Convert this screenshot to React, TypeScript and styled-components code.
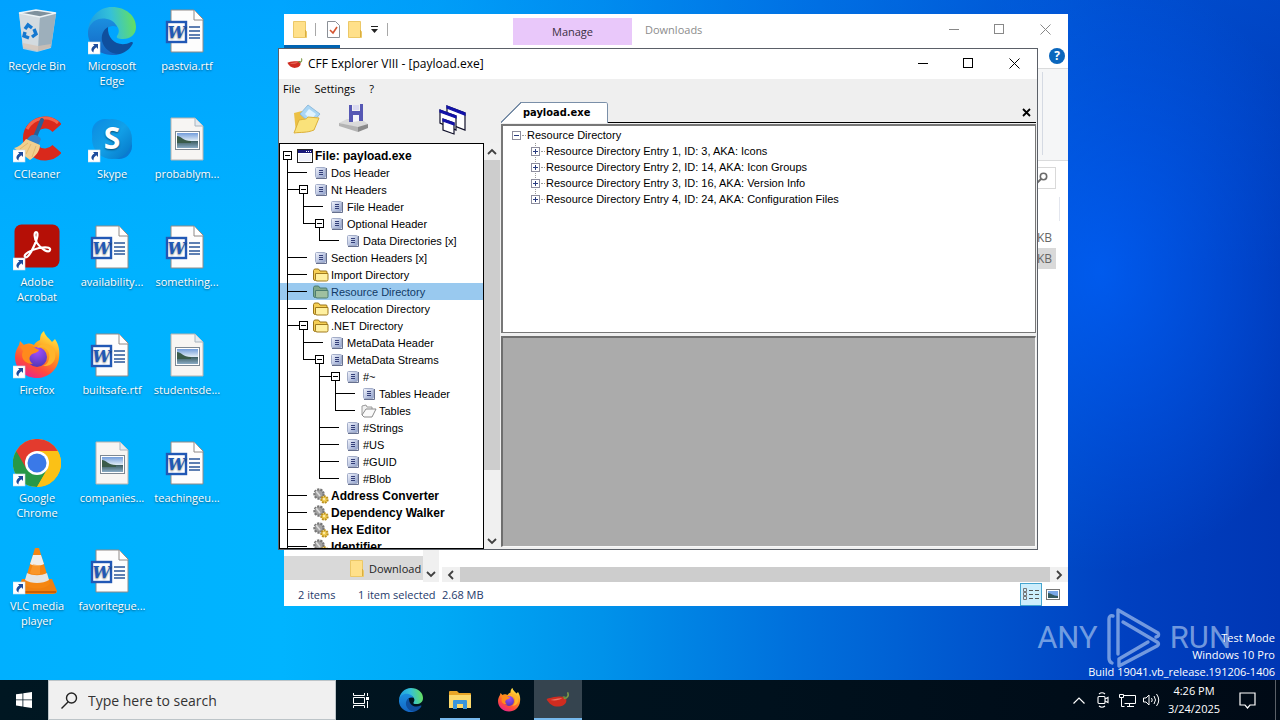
import React from "react";
import styled, { createGlobalStyle, css } from "styled-components";

const UI = `"Open Sans", "Noto Sans", sans-serif`;
const CLASSIC = `"Liberation Sans", Arial, sans-serif`;

const GlobalStyle = createGlobalStyle`
  *, *::before, *::after { box-sizing: border-box; }
  body { margin: 0; font-family: ${UI}; font-size: 11px; color: #000; }
  button, input { font: inherit; color: inherit; border: 0; padding: 0; margin: 0; background: none; border-radius: 0; }
  svg { display: block; flex: none; }
  ul { list-style: none; margin: 0; padding: 0; }
`;

/* ---------- Application icons ---------- */

const Shortcut = () => (
  <g>
    <rect x="0" y="35" width="12" height="12" fill="#fff" stroke="#c9dcea" strokeWidth=".6" />
    <path d="M5 37h5v5l-1.700-1.700c-2 1.500-3 3-2.800 5.200-3-1.600-2.800-5 .9-7z" fill="#1e4c9c" />
  </g>
);

const EdgeArt = () => (
  <g>
    <defs>
      <linearGradient id="edgeTop" x1="0" y1=".5" x2="1" y2=".4">
        <stop offset="0" stopColor="#1b9de2" />
        <stop offset=".5" stopColor="#35c1d8" />
        <stop offset="1" stopColor="#66e05c" />
      </linearGradient>
      <linearGradient id="edgeLeft" x1="0" y1="0" x2="0" y2="1">
        <stop offset="0" stopColor="#1b8fdf" />
        <stop offset="1" stopColor="#1466c4" />
      </linearGradient>
    </defs>
    <path d="M0 24C1 10 11 0 24 0c14 0 24 9 24 20 0 8-6 12-13 12-5 0-7-1-6-3 3-4 2-8-1-11C20 11 5 12 0 24z" fill="url(#edgeTop)" />
    <path d="M0 24c2-10 11-14 19-12 6 1 9 5 10 8-6-3-13 1-13 9 0 9 7 17 16 18-2 1-5 1-8 1C10 48-1 37 0 24z" fill="url(#edgeLeft)" />
    <path d="M20 20c-5 3-7 8-6 14 2 8 10 14 18 13 6-2 11-6 13-11 0-1-1-1-2-1-11 6-24-1-23-15z" fill="#0f4f9e" />
  </g>
);

const FirefoxArt = () => (
  <g>
    <defs>
      <linearGradient id="foxBody" x1=".8" y1="0" x2=".3" y2="1">
        <stop offset="0" stopColor="#fff04a" />
        <stop offset=".4" stopColor="#ff9a1f" />
        <stop offset=".75" stopColor="#ff4a3c" />
        <stop offset="1" stopColor="#e8248e" />
      </linearGradient>
      <radialGradient id="foxGlobe" cx=".5" cy=".2" r=".8">
        <stop offset="0" stopColor="#a44dff" />
        <stop offset="1" stopColor="#5337b5" />
      </radialGradient>
    </defs>
    <path d="M27 9c0-4 1-7 4-9 1 5 5 7 8 11l3-3c4 6 5 12 4 19-1 12-11 20-22 20C12 47 2 38 2 26c0-5 2-9 4-12l1-4 4 4c4-2 7-2 10 0 1-2 3-4 6-5z" fill="url(#foxBody)" />
    <circle cx="24" cy="26" r="10" fill="url(#foxGlobe)" />
    <path d="M7 16c5-4 11-3 15 1l4 2c-1 3-6 3-8 5-3 3-1 7 2 9-9 0-13-7-10-13z" fill="#ff8a1c" />
    <path d="M24 17c8-3 14 3 12 11-1 4-3 6-6 7 9 1 14-6 12-14-1-5-5-8-10-8-4 0-7 2-8 4z" fill="#ffb52b" />
  </g>
);

const ChiliArt = () => (
  <g>
    <path d="M1 14c5-1 11-4 19-4 8-1 15 0 17 4 2 7-4 13-13 14C14 29 5 23 1 14z" fill="#cf2c20" />
    <path d="M8 16c7-1 14-4 22-3-4 3-14 5-22 3z" fill="#ec7463" />
    <path d="M34 13c6-1 8-5 6-10" stroke="#7d9a48" strokeWidth="3" fill="none" strokeLinecap="round" />
    <path d="M30 10c4-2 8 0 8 4-3-1-5-1-8-4z" fill="#6b8a3a" />
  </g>
);

const RecycleIcon = () => (
  <svg width="48" height="48" viewBox="0 0 48 48" aria-hidden="true">
    <path d="M6 6l17-3 20 4-5 34-14 4-14-3z" fill="#c5d0d7" fillOpacity=".9" />
    <path d="M6 6l21 4-2 34-15-4z" fill="#d3dbe0" />
    <path d="M27 10l16-4-5 34-13 4z" fill="#9dafbb" />
    <path d="M6 6l17-3 20 3-16 4z" fill="#7f919d" stroke="#edf3f6" strokeWidth="1.400" />
    <path d="M10 36l15 3 13-2-1 4-12 3-15-3z" fill="#d5c3b4" fillOpacity=".7" />
    <g stroke="#1478d0" strokeWidth="3.400" fill="none">
      <path d="M12 22l3-4 4 3" />
      <path d="M21 22l2 5-4 3" />
      <path d="M16 31l-5-2 1-4" />
    </g>
  </svg>
);

const EdgeIcon = () => (
  <svg width="48" height="48" viewBox="0 0 48 48" aria-hidden="true"><EdgeArt /><Shortcut /></svg>
);

const FirefoxIcon = () => (
  <svg width="48" height="48" viewBox="0 0 48 48" aria-hidden="true"><FirefoxArt /><Shortcut /></svg>
);

const WordIcon = () => (
  <svg width="48" height="48" viewBox="0 0 48 48" aria-hidden="true">
    <path d="M8 3h23l9 9v33H8z" fill="#fdfdfd" stroke="#8f8a88" />
    <path d="M31 3v10h9" fill="#fff" stroke="#8f8a88" />
    <path d="M26 20h11M26 24h11M26 28h11M26 31h11" stroke="#2a5699" strokeWidth="1.300" />
    <rect x="4" y="15" width="19" height="20" fill="#fff" stroke="#2158b5" strokeWidth="2.400" />
    <text x="13.500" y="31" textAnchor="middle" fontFamily="DejaVu Serif, serif" fontStyle="italic" fontWeight="700" fontSize="16" fill="#2158b5">W</text>
  </svg>
);

const PictureFileIcon = () => (
  <svg width="48" height="48" viewBox="0 0 48 48" aria-hidden="true">
    <defs>
      <linearGradient id="photoSky" x1="0" y1="0" x2="0" y2="1">
        <stop offset="0" stopColor="#6b97d8" />
        <stop offset=".5" stopColor="#dce9f5" />
        <stop offset=".55" stopColor="#3f5f63" />
        <stop offset="1" stopColor="#8fb0cc" />
      </linearGradient>
    </defs>
    <path d="M8 3h24l8 8v34H8z" fill="#f7f5f3" stroke="#b9b3ae" />
    <path d="M32 3v8h8" fill="#e4eaf0" stroke="#a9b4be" />
    <rect x="13.500" y="17.500" width="22" height="16" fill="url(#photoSky)" stroke="#fff" />
    <rect x="12.500" y="16.500" width="24" height="18" fill="none" stroke="#7d8893" />
    <path d="M14 21c4 0 6 5 14 5v2H14z" fill="#3a5b4a" />
  </svg>
);

const CCleanerIcon = () => (
  <svg width="48" height="48" viewBox="0 0 48 48" aria-hidden="true">
    <path d="M44 13A16 16 0 1 0 44 34" fill="none" stroke="#d9291c" strokeWidth="12" />
    <path d="M45 8A20 20 0 0 0 14 14" fill="none" stroke="#f2644c" strokeWidth="3" />
    <path d="M29 5l-7 17" stroke="#2b5f95" strokeWidth="4" strokeLinecap="round" />
    <path d="M16 22c4-4 9-2 12 2l-3 7-13-4z" fill="#3483c9" />
    <path d="M1 33c5-1 9-5 12-9l14 6c0 6-4 11-10 15z" fill="#f1cf8e" />
    <path d="M7 34l8-6M13 39l5-10M19 42l4-11" stroke="#e0b970" />
    <Shortcut />
  </svg>
);

const SkypeIcon = () => (
  <svg width="48" height="48" viewBox="0 0 48 48" aria-hidden="true">
    <defs>
      <linearGradient id="skypeFill" x1="0" y1="0" x2="1" y2="1">
        <stop offset="0" stopColor="#0c8be0" />
        <stop offset=".5" stopColor="#12a0e8" />
        <stop offset="1" stopColor="#0573c4" />
      </linearGradient>
    </defs>
    <circle cx="17" cy="17" r="13" fill="#0b90e6" />
    <circle cx="31" cy="31" r="13" fill="#0a7ad2" />
    <circle cx="24" cy="24" r="20" fill="url(#skypeFill)" />
    <text x="24" y="34" textAnchor="middle" fontFamily="Open Sans, sans-serif" fontWeight="700" fontSize="30" fill="#fff">S</text>
    <Shortcut />
  </svg>
);

const AcrobatIcon = () => (
  <svg width="48" height="48" viewBox="0 0 48 48" aria-hidden="true">
    <rect x="1.500" y="1.500" width="45" height="43" rx="7" fill="#b50f06" />
    <path d="M12 34c-2-3 6-7 14-9 6-1 12-1 11 2-1 4-9-1-13-7-3-5-3-11-1-11 3 0 1 8-2 14-3 7-7 13-9 11z" fill="none" stroke="#fff" strokeWidth="2.200" strokeLinejoin="round" />
    <Shortcut />
  </svg>
);

const ChromeIcon = () => (
  <svg width="48" height="48" viewBox="0 0 48 48" aria-hidden="true">
    <circle cx="24" cy="24" r="24" fill="#fbc116" />
    <path d="M3.200 12A24 24 0 0 0 24 48l10.500-18L24 24z" fill="#279847" />
    <path d="M3.200 12A24 24 0 0 1 44.800 12H24L13.600 30z" fill="#e33b2e" />
    <path d="M44.800 12H24v12l10.400 6L24 48a24 24 0 0 0 20.800-36z" fill="#fbc116" />
    <circle cx="24" cy="24" r="12" fill="#fff" />
    <circle cx="24" cy="24" r="9.500" fill="#3a79e8" />
    <Shortcut />
  </svg>
);

const VlcIcon = () => (
  <svg width="48" height="48" viewBox="0 0 48 48" aria-hidden="true">
    <path d="M9 32h30l5 12c0 2-2 3-4 3H8c-2 0-4-1-4-3z" fill="#f08010" />
    <path d="M5 44h38v2H5z" fill="#c85f06" />
    <path d="M22 1h4l11 36c-6 6-20 6-26 0z" fill="#f58612" />
    <path d="M20 8h8l3 9c-4 2-10 2-14 0z" fill="#f0eeec" />
    <path d="M14 26c6 3 14 3 20 0l2 7c-6 4-18 4-24 0z" fill="#e6e4e2" />
    <path d="M20 17c3 1 5 1 7 1v9c-4 1-8 0-10-1z" fill="#ffa640" fillOpacity=".5" />
    <Shortcut />
  </svg>
);

/* ---------- Small glyphs ---------- */

const Folder = () => (
  <svg width="14" height="17" viewBox="0 0 14 17" aria-hidden="true">
    <path d="M.5.500h12v9l1 1v6H.5z" fill="#ffe08a" stroke="#ecc867" />
    <path d="M12.500 9v7" stroke="#d9ae3f" />
  </svg>
);

const CheckedPage = () => (
  <svg width="13" height="17" viewBox="0 0 13 17" aria-hidden="true">
    <path d="M.5.500h8l4 4v12H.5z" fill="#fff" stroke="#8b9097" />
    <path d="M3 9l3 3 4-6" fill="none" stroke="#d4542f" strokeWidth="1.600" />
  </svg>
);

const Chevron = ({ dir, color = "#404040" }: { dir: "up" | "down" | "left" | "right"; color?: string }) => {
  const paths = { up: "M1 7l4-4 4 4", down: "M1 3l4 4 4-4", left: "M7 1L3 5l4 4", right: "M3 1l4 4-4 4" };
  return (
    <svg width="10" height="10" viewBox="0 0 10 10" aria-hidden="true">
      <path d={paths[dir]} fill="none" stroke={color} strokeWidth="1.800" />
    </svg>
  );
};

const CaptionGlyph = ({ kind }: { kind: "min" | "max" | "close" }) => (
  <svg width="11" height="11" viewBox="0 0 11 11" fill="none" stroke="currentColor" aria-hidden="true">
    {kind === "min" && <path d="M1 5.500h10" />}
    {kind === "max" && <rect x=".5" y=".5" width="9" height="9" />}
    {kind === "close" && <path d="M.5.500l10 10M10.500.500l-10 10" />}
  </svg>
);

const HeaderGlyph = () => (
  <svg width="12" height="12" viewBox="0 0 12 12" aria-hidden="true">
    <defs>
      <linearGradient id="hdrFill" x1="0" y1="0" x2="1" y2="1">
        <stop offset="0" stopColor="#f4f6fd" />
        <stop offset="1" stopColor="#8fa0cc" />
      </linearGradient>
    </defs>
    <rect x=".5" y=".5" width="10" height="10" rx="1" fill="url(#hdrFill)" stroke="#a3adc8" />
    <path d="M11.500 1v10.500H1" fill="none" stroke="#66708f" />
    <path d="M4 3.500h4M4 5.500h4M4 7.500h4" stroke="#343f78" />
  </svg>
);

const ClosedFolderGlyph = ({ selected }: { selected?: boolean }) => (
  <svg width="16" height="14" viewBox="0 0 16 14" aria-hidden="true">
    <path d="M.5 11V2.500l1-1.500h4l1.500 2H13q1 0 1 1v7q0 1.500-1.500 1.500h-10Q.5 12.500.5 11z" fill={selected ? "#7fa98a" : "#f6cf55"} stroke={selected ? "#4c7d70" : "#9a7418"} />
    <path d="M2.500 5.500h12.500v6q0 1.500-1.500 1.500H4q-1.500 0-1.500-1.500z" fill={selected ? "#9fc0a0" : "#fff0a0"} stroke={selected ? "#4c7d70" : "#a07b1e"} />
  </svg>
);

const OpenFolderGlyph = () => (
  <svg width="16" height="14" viewBox="0 0 16 14" aria-hidden="true">
    <path d="M1 11V2l4-1 1 2h5v3" fill="#f1f1f1" stroke="#9a9a9a" />
    <path d="M1 11l4-6h10l-4 8H3z" fill="#fafafa" stroke="#8a8a8a" />
  </svg>
);

const WindowGlyph = () => (
  <svg width="16" height="14" viewBox="0 0 16 14" aria-hidden="true">
    <rect x=".5" y=".5" width="15" height="13" fill="#fff" stroke="#222" />
    <rect x="1" y="1" width="14" height="3" fill="#18187c" />
    <path d="M9 2.500h1M11 2.500h1M13 2.500h1" stroke="#fff" />
    <rect x="2" y="5" width="12" height="7" fill="#eef0fa" />
  </svg>
);

const GearsGlyph = () => (
  <svg width="16" height="16" viewBox="0 0 16 16" aria-hidden="true">
    <circle cx="6" cy="6" r="4.600" fill="#a2a2a2" stroke="#777" strokeWidth="2.200" strokeDasharray="2.200 1" />
    <path d="M3 3l4 5" stroke="#dcdcdc" strokeWidth="1.600" />
    <circle cx="11.500" cy="11.500" r="3.200" fill="#f0cc52" stroke="#b98f1f" strokeWidth="2" strokeDasharray="1.800 1" />
    <circle cx="11" cy="11" r="1" fill="#fff4c4" />
  </svg>
);

const OpenFileIcon = () => (
  <svg width="28" height="30" viewBox="0 0 28 30" aria-hidden="true">
    <path d="M1 9l8-2 3 3v18l-9 1z" fill="#ecc044" />
    <path d="M7 10L15 1l12 9-9 10z" fill="#a9d6f5" stroke="#8fbbdc" />
    <path d="M12 10l4-5 7 5-5 6z" fill="#e0f3fe" />
    <path d="M1 29l5-13c5-1 7 0 9-3l11 1-5 12c-7 3-13 2-20 3z" fill="#fae27a" stroke="#dcb03a" />
  </svg>
);

const SaveIcon = () => (
  <svg width="29" height="29" viewBox="0 0 29 29" aria-hidden="true">
    <path d="M0 19l8-4h14l7 5-9 4z" fill="#dadada" />
    <path d="M0 19l19 4v5L0 22z" fill="#b4b4b4" />
    <path d="M19 23l10-3v4l-10 4z" fill="#8a8a8a" />
    <path d="M10 1h3v6h8V0h3v17h-4v-6h-6v7h-4z" fill="#5658b4" />
    <path d="M14 1h6v5h-6z" fill="#dadaf0" />
    <path d="M14 11h6v6l-6 1z" fill="#f4f4fa" />
  </svg>
);

const CascadeIcon = () => (
  <svg width="28" height="31" viewBox="0 0 28 31" aria-hidden="true">
    <g stroke="#10102a" strokeWidth="1.200">
      <path d="M8 2l18 7v17L8 19z" fill="#fff" />
      <path d="M8 2l18 7v2L8 4z" fill="#1212a8" stroke="#1212a8" />
      <path d="M1 6l16 6v14L1 19z" fill="#fff" />
      <path d="M1 6l16 6v2L1 8z" fill="#1212a8" stroke="#1212a8" />
      <path d="M4 15l11 4v11L4 26z" fill="#fff" />
      <path d="M4 15l11 4v2L4 17z" fill="#1212a8" stroke="#1212a8" />
    </g>
  </svg>
);

/* ---------- Desktop ---------- */

const Screen = styled.div`
  min-height: 100vh;
  display: flex;
  flex-direction: column;
  overflow: hidden;
`;

const Desktop = styled.main`
  position: relative;
  flex: 1;
  padding: 7px 0 0;
  background:
    radial-gradient(ellipse 240px 300px at 86% 40%, rgba(0, 100, 255, 0.7), rgba(0, 100, 255, 0)),
    linear-gradient(180deg, rgba(0, 120, 255, 0.25), rgba(0, 120, 255, 0) 40%),
    linear-gradient(90deg, #00b0ff 0%, #00b4ff 22%, #00aaf6 34%, #0092ea 47%, #0070dc 62%, #0052cc 78%, #0040c0 88%, #0036b4 100%);
`;

const IconGrid = styled.ul`
  display: grid;
  grid-auto-flow: column;
  grid-template-rows: repeat(6, 108px);
  grid-auto-columns: 75px;
  justify-content: start;
`;

const IconButton = styled.button`
  width: 74px;
  display: flex;
  flex-direction: column;
  align-items: center;
  gap: 3px;
  padding: 0 4px;
  color: #fff;
  line-height: 15px;
  text-align: center;
  text-shadow: 0 1px 2px rgba(0, 0, 0, 0.5);
`;

const Watermark = styled.div`
  position: absolute;
  right: 49px;
  bottom: 11px;
  display: flex;
  align-items: center;
  gap: 8px;
  color: rgba(190, 214, 245, 0.6);
  font: 31px/60px Roboto, "Liberation Sans", sans-serif;
`;

const BuildInfo = styled.div`
  position: absolute;
  right: 5px;
  bottom: 0;
  color: #fff;
  line-height: 17px;
  text-align: right;
`;

const desktopItems: [string, React.FC][] = [
  ["Recycle Bin", RecycleIcon], ["CCleaner", CCleanerIcon], ["Adobe Acrobat", AcrobatIcon],
  ["Firefox", FirefoxIcon], ["Google Chrome", ChromeIcon], ["VLC media player", VlcIcon],
  ["Microsoft Edge", EdgeIcon], ["Skype", SkypeIcon], ["availability...", WordIcon],
  ["builtsafe.rtf", WordIcon], ["companies...", PictureFileIcon], ["favoritegue...", WordIcon],
  ["pastvia.rtf", WordIcon], ["probablym...", PictureFileIcon], ["something...", WordIcon],
  ["studentsde...", PictureFileIcon], ["teachingeu...", WordIcon],
];

/* ---------- Shared window parts ---------- */

const CaptionButtons = styled.div<{ $muted?: boolean }>`
  display: flex;
  align-self: stretch;
  margin-left: auto;
  color: ${(p) => (p.$muted ? "#888" : "#000")};
`;

const CaptionButton = styled.button`
  width: 46px;
  display: grid;
  place-items: center;
`;

const Captions = ({ muted }: { muted?: boolean }) => (
  <CaptionButtons $muted={muted}>
    <CaptionButton aria-label="Minimize"><CaptionGlyph kind="min" /></CaptionButton>
    <CaptionButton aria-label="Maximize"><CaptionGlyph kind="max" /></CaptionButton>
    <CaptionButton aria-label="Close"><CaptionGlyph kind="close" /></CaptionButton>
  </CaptionButtons>
);

const VScroll = styled.div`
  width: 16px;
  display: flex;
  flex-direction: column;
  background: #f0f0f0;
`;

const HScroll = styled.div`
  flex: 1;
  height: 15px;
  display: flex;
  margin-left: 3px;
  background: #f0f0f0;
`;

const ScrollButton = styled.button`
  height: 17px;
  display: grid;
  place-items: center;
  ${HScroll} & { height: 15px; width: 18px; }
`;

const Thumb = styled.div<{ $size: number; $rest: number }>`
  flex: ${(p) => p.$size} 0 0;
  background: #cdcdcd;
  & + div { flex: ${(p) => p.$rest} 0 0; }
`;

/* ---------- File Explorer window ---------- */

const Explorer = styled.section`
  position: absolute;
  left: 284px;
  top: 14px;
  width: 784px;
  height: 592px;
  display: flex;
  flex-direction: column;
  background: #fff;
`;

const ExplorerTitle = styled.header`
  display: flex;
  height: 31px;
`;

const QuickAccess = styled.div`
  width: 229px;
  display: flex;
  align-items: center;
  gap: 8px;
  padding-left: 9px;
`;

const Divider = styled.span`
  width: 1px;
  height: 13px;
  margin-right: 3px;
  background: #a8a8a8;
`;

const ManageTab = styled.button`
  width: 119px;
  margin-top: 4px;
  background: #e9c8fa;
  color: #3b2f42;
`;

const ExplorerName = styled.span`
  padding: 8px 0 0 13px;
  line-height: 16px;
  color: #8c8c8c;
`;

const RibbonTabs = styled.div`
  height: 24px;
  flex: none;
  display: flex;
  align-items: flex-start;
  justify-content: space-between;
  border-bottom: 1px solid #dadbdc;
`;

const FileTab = styled.div`
  width: 56px;
  height: 22px;
  background: #0063b1;
`;

const HelpButton = styled.button`
  width: 16px;
  height: 16px;
  margin: 3px 3px 0 0;
  border-radius: 50%;
  background: #0a66bd;
  color: #fff;
  font-size: 12px;
  font-weight: 700;
  line-height: 16px;
`;

const Ribbon = styled.div`
  height: 92px;
  flex: none;
  padding: 3px 25px 5px 0;
  display: flex;
  justify-content: flex-end;
  background: #f5f6f7;
  border-bottom: 1px solid #dadbdc;
  &::after { content: ""; width: 1px; background: #d5dae3; }
`;

const AddressRow = styled.div`
  height: 36px;
  flex: none;
  display: flex;
  justify-content: flex-end;
  padding: 6px 12px 8px 0;
`;

const SearchBox = styled.button`
  width: 120px;
  display: flex;
  align-items: center;
  justify-content: flex-end;
  padding-right: 7px;
  border: 1px solid #d9d9d9;
`;

const FileArea = styled.div`
  flex: 1;
  display: flex;
  min-height: 0;
`;

const NavPane = styled.nav`
  width: 139px;
  display: flex;
  flex-direction: column;
  justify-content: flex-end;
  padding-bottom: 2px;
`;

const NavItem = styled.a`
  height: 24px;
  display: flex;
  align-items: center;
  gap: 5px;
  padding-left: 66px;
  color: #222;
  text-decoration: none;
  background: #d9d9d9;
`;

const FilePane = styled.div`
  flex: 1;
  display: flex;
  flex-direction: column;
`;

const ColumnHeads = styled.div`
  height: 24px;
  margin-right: 8px;
  border-right: 1px solid #e3e6ee;
`;

const FileSizes = styled.table`
  flex: 1;
  display: block;
  padding: 6px 12px 0 0;
  font-size: 12px;
  color: #666;
  tbody { display: block; }
  tr { display: flex; justify-content: flex-end; }
  tr[aria-selected="true"] { background: #d9d9d9; }
  td { padding: 0 4px 0 0; line-height: 21px; }
`;

const StatusBar = styled.footer`
  height: 24px;
  flex: none;
  display: flex;
  align-items: center;
  padding: 0 4px 0 14px;
  color: #1e3a6b;
`;

const StatusText = styled.span<{ $width?: number }>`
  width: ${(p) => (p.$width ? `${p.$width}px` : "auto")};
`;

const ViewButton = styled.button<{ $active?: boolean }>`
  width: 22px;
  height: 23px;
  display: grid;
  place-items: center;
  ${(p) => p.$active && css`
    margin-left: auto;
    background: #cdeefc;
    border: 1px solid #45a5cf;
  `}
`;

const ExplorerWindow = () => (
  <Explorer aria-label="Downloads">
    <ExplorerTitle>
      <QuickAccess>
        <Folder />
        <Divider />
        <CheckedPage />
        <Folder />
        <svg width="9" height="9" viewBox="0 0 9 9" aria-hidden="true"><path d="M1 1.500h7" stroke="#222" /><path d="M1 4h7L4.500 8z" fill="#222" /></svg>
        <Divider />
      </QuickAccess>
      <ManageTab>Manage</ManageTab>
      <ExplorerName>Downloads</ExplorerName>
      <Captions muted />
    </ExplorerTitle>
    <RibbonTabs><FileTab /><HelpButton aria-label="Help">?</HelpButton></RibbonTabs>
    <Ribbon />
    <AddressRow>
      <SearchBox aria-label="Search Downloads">
        <svg width="12" height="12" viewBox="0 0 12 12" aria-hidden="true"><circle cx="7.500" cy="4.500" r="3.200" fill="none" stroke="#6a6a6a" strokeWidth="1.600" /><path d="M5 7l-4 4" stroke="#6a6a6a" strokeWidth="1.800" /></svg>
      </SearchBox>
    </AddressRow>
    <FileArea>
      <NavPane><NavItem href="#"><Folder />Download</NavItem></NavPane>
      <VScroll>
        <Thumb $size={0} $rest={1} /><div />
        <ScrollButton aria-label="Scroll down"><Chevron dir="down" /></ScrollButton>
      </VScroll>
      <FilePane>
        <ColumnHeads />
        <FileSizes><tbody><tr><td>KB</td></tr><tr aria-selected="true"><td>KB</td></tr></tbody></FileSizes>
        <HScrollRow />
      </FilePane>
    </FileArea>
    <StatusBar>
      <StatusText $width={60}>2 items</StatusText>
      <StatusText $width={84}>1 item selected</StatusText>
      <StatusText>2.68 MB</StatusText>
      <ViewButton $active aria-label="Details">
        <svg width="16" height="13" viewBox="0 0 16 13" fill="none" aria-hidden="true"><path d="M.5.500h3v3h-3zM.5 4.500h3v3h-3zM.5 8.500h3v3h-3z" stroke="#777" /><path d="M6 2.500h4M6 6.500h4M6 10.500h4M12 2.500h4M12 6.500h4M12 10.500h4" stroke="#555" /></svg>
      </ViewButton>
      <ViewButton aria-label="Large icons">
        <svg width="14" height="11" viewBox="0 0 14 11" aria-hidden="true"><rect x=".5" y=".5" width="13" height="10" fill="#fff" stroke="#777" /><rect x="2" y="2" width="10" height="7" fill="#7aa7e6" /><path d="M2 4c3 0 5 3 10 3v2H2z" fill="#35595e" /></svg>
      </ViewButton>
    </StatusBar>
  </Explorer>
);

const PaneBottom = styled.div`
  display: flex;
`;

const HScrollRow = () => (
  <PaneBottom>
    <HScroll>
      <ScrollButton aria-label="Scroll left"><Chevron dir="left" /></ScrollButton>
      <Thumb $size={1} $rest={0} /><div />
      <ScrollButton aria-label="Scroll right"><Chevron dir="right" /></ScrollButton>
    </HScroll>
  </PaneBottom>
);

/* ---------- CFF Explorer window ---------- */

const Cff = styled.section`
  position: absolute;
  left: 278px;
  top: 48px;
  width: 760px;
  height: 502px;
  display: flex;
  flex-direction: column;
  background: #efefef;
  border: 1px solid #5b6068;
`;

const CffTitle = styled.header`
  height: 30px;
  flex: none;
  display: flex;
  align-items: center;
  gap: 5px;
  padding: 0 0 2px 8px;
  background: #fff;
  font-size: 12px;
`;

const MenuBar = styled.nav`
  height: 20px;
  flex: none;
  display: flex;
  align-items: flex-start;
  gap: 14px;
  padding-left: 4px;
  font-size: 11px;
  line-height: 19px;
`;

const CffBody = styled.div`
  flex: 1;
  min-height: 0;
  display: grid;
  grid-template-columns: 222px 1fr;
`;

const SideColumn = styled.div`
  display: flex;
  flex-direction: column;
  min-height: 0;
`;

const ToolBar = styled.div`
  height: 44px;
  flex: none;
  display: flex;
  align-items: flex-start;
  gap: 18px;
  padding: 5px 34px 0 14px;
`;

const ToolButton = styled.button<{ $end?: boolean }>`
  ${(p) => p.$end && css`margin-left: auto;`}
`;

const SideBody = styled.div`
  flex: 1;
  min-height: 0;
  display: flex;
`;

const Tree = styled.ul`
  width: 205px;
  padding-top: 3px;
  overflow: hidden;
  background: #fff;
  border: 1px solid #000;
  font-family: ${CLASSIC};
  font-size: 11px;
`;

const TreeRow = styled.li<{ $selected?: boolean; $bold?: boolean }>`
  height: 17px;
  display: flex;
  line-height: 19px;
  white-space: nowrap;
  ${(p) => p.$selected && css`background: #99c9ef; color: #123a66;`}
  ${(p) => p.$bold && css`font-weight: 700; font-size: 12px;`}
`;

const ink = "linear-gradient(#000, #000)";
const guideLines: Record<string, string> = {
  " ": "none",
  v: `${ink} 7px 0 / 1px 17px no-repeat`,
  t: `${ink} 7px 0 / 1px 17px no-repeat, ${ink} 7px 8px / 9px 1px no-repeat`,
  l: `${ink} 7px 0 / 1px 9px no-repeat, ${ink} 7px 8px / 9px 1px no-repeat`,
  "-": `${ink} 0 8px / 11px 1px no-repeat`,
  o: `${ink} 0 8px / 3px 1px no-repeat, ${ink} 7px 13px / 1px 4px no-repeat`,
  r: `${ink} 7px 13px / 1px 4px no-repeat`,
};

const Guide = styled.span<{ $kind: string }>`
  width: 16px;
  height: 17px;
  flex: none;
  display: flex;
  padding: 4px 0 0 3px;
  background: ${(p) => guideLines[p.$kind]};
`;

const Toggle = styled.button`
  width: 9px;
  height: 9px;
  border: 1px solid #000;
  background: ${ink} center / 5px 1px no-repeat, #fff;
`;

const TreeIcon = styled.span`
  width: 18px;
  height: 17px;
  margin-right: 1px;
  flex: none;
  display: grid;
  place-items: center;
`;

type Glyph = "window" | "header" | "folder" | "open" | "gears";
const glyphs: Record<Glyph, React.FC<{ selected?: boolean }>> = {
  window: WindowGlyph, header: HeaderGlyph, folder: ClosedFolderGlyph, open: OpenFolderGlyph, gears: GearsGlyph,
};

const treeRows: { guides: string; icon: Glyph; label: string; bold?: boolean; selected?: boolean }[] = [
  { guides: "r", icon: "window", label: "File: payload.exe", bold: true },
  { guides: "t-", icon: "header", label: "Dos Header" },
  { guides: "to", icon: "header", label: "Nt Headers" },
  { guides: "vt-", icon: "header", label: "File Header" },
  { guides: "vlo", icon: "header", label: "Optional Header" },
  { guides: "v l-", icon: "header", label: "Data Directories [x]" },
  { guides: "t-", icon: "header", label: "Section Headers [x]" },
  { guides: "t-", icon: "folder", label: "Import Directory" },
  { guides: "t-", icon: "folder", label: "Resource Directory", selected: true },
  { guides: "t-", icon: "folder", label: "Relocation Directory" },
  { guides: "to", icon: "folder", label: ".NET Directory" },
  { guides: "vt-", icon: "header", label: "MetaData Header" },
  { guides: "vlo", icon: "header", label: "MetaData Streams" },
  { guides: "v to", icon: "header", label: "#~" },
  { guides: "v vt-", icon: "header", label: "Tables Header" },
  { guides: "v vl-", icon: "open", label: "Tables" },
  { guides: "v t-", icon: "header", label: "#Strings" },
  { guides: "v t-", icon: "header", label: "#US" },
  { guides: "v t-", icon: "header", label: "#GUID" },
  { guides: "v l-", icon: "header", label: "#Blob" },
  { guides: "t-", icon: "gears", label: "Address Converter", bold: true },
  { guides: "t-", icon: "gears", label: "Dependency Walker", bold: true },
  { guides: "t-", icon: "gears", label: "Hex Editor", bold: true },
  { guides: "t-", icon: "gears", label: "Identifier", bold: true },
];

const MainColumn = styled.div`
  display: flex;
  flex-direction: column;
  min-height: 0;
  padding: 3px 1px 2px 0;
`;

const TabStrip = styled.div`
  height: 21px;
  flex: none;
  display: flex;
`;

const edge = "#7a8fa8";
const Tab = styled.button`
  width: 107px;
  flex: none;
  padding-left: 22px;
  text-align: left;
  font: 700 11px/20px "DejaVu Sans Condensed", "DejaVu Sans", sans-serif;
  border-right: 1px solid ${edge};
  border-radius: 0 3px 0 0;
  background:
    linear-gradient(${edge}, ${edge}) 20px 0 / 100px 1px no-repeat,
    linear-gradient(135deg, #efefef 14px, ${edge} 14px, ${edge} 15px, #fff 15px);
`;

const TabRest = styled.div`
  flex: 1;
  display: flex;
  align-items: center;
  justify-content: flex-end;
  padding-right: 5px;
  border-bottom: 1px solid #000;
`;

const Details = styled.div`
  height: 209px;
  flex: none;
  margin-top: 1px;
  padding: 1px 9px;
  background: #fff;
  border: 1px solid #777;
  border-width: 2px 1px 1px 2px;
  font-family: ${CLASSIC};
  font-size: 11px;
  line-height: 16px;
`;

const DetailList = styled.ul`
  ul { margin-left: 19px; background: repeating-linear-gradient(#999 0 1px, transparent 1px 2px) 4px 0 / 1px 56px no-repeat; }
`;

const DetailRow = styled.div`
  display: flex;
  align-items: center;
  &::before { content: ""; order: 1; width: 4px; border-top: 1px dotted #999; margin: 0 1px; }
  span { order: 2; }
`;

const DetailToggle = styled.button<{ $closed?: boolean }>`
  width: 9px;
  height: 9px;
  border: 1px solid #8d8d9d;
  background:
    linear-gradient(#2b3d80, #2b3d80) center / 5px 1px no-repeat,
    linear-gradient(#2b3d80, #2b3d80) center / 1px ${(p) => (p.$closed ? 5 : 0)}px no-repeat,
    #fff;
`;

const EmptyPane = styled.div`
  flex: 1;
  margin-top: 3px;
  background: #ababab;
  border: solid;
  border-width: 2px 1px 1px 2px;
  border-color: #6e6e6e #f8f8f8 #f8f8f8 #6e6e6e;
`;

const entries = [
  "Resource Directory Entry 1, ID: 3, AKA: Icons",
  "Resource Directory Entry 2, ID: 14, AKA: Icon Groups",
  "Resource Directory Entry 3, ID: 16, AKA: Version Info",
  "Resource Directory Entry 4, ID: 24, AKA: Configuration Files",
];

const CffWindow = () => (
  <Cff aria-label="CFF Explorer VIII">
    <CffTitle>
      <svg width="16" height="13" viewBox="0 0 44 32" aria-hidden="true"><ChiliArt /></svg>
      <span>CFF Explorer VIII - [payload.exe]</span>
      <Captions />
    </CffTitle>
    <MenuBar><button>File</button><button>Settings</button><button>?</button></MenuBar>
    <CffBody>
      <SideColumn>
        <ToolBar>
          <ToolButton aria-label="Open"><OpenFileIcon /></ToolButton>
          <ToolButton aria-label="Save"><SaveIcon /></ToolButton>
          <ToolButton $end aria-label="Windows"><CascadeIcon /></ToolButton>
        </ToolBar>
        <SideBody>
          <Tree>
            {treeRows.map((row) => {
              const Icon = glyphs[row.icon];
              return (
                <TreeRow key={row.label} $bold={row.bold} $selected={row.selected}>
                  {[...row.guides].map((kind, i) => (
                    <Guide key={i} $kind={kind}>
                      {(kind === "o" || kind === "r") && <Toggle aria-label={`Collapse ${row.label}`} />}
                    </Guide>
                  ))}
                  <TreeIcon><Icon selected={row.selected} /></TreeIcon>
                  <span>{row.label}</span>
                </TreeRow>
              );
            })}
          </Tree>
          <VScroll>
            <ScrollButton aria-label="Scroll up"><Chevron dir="up" /></ScrollButton>
            <Thumb $size={310} $rest={62} /><div />
            <ScrollButton aria-label="Scroll down"><Chevron dir="down" /></ScrollButton>
          </VScroll>
        </SideBody>
      </SideColumn>
      <MainColumn>
        <TabStrip>
          <Tab>payload.exe</Tab>
          <TabRest>
            <button aria-label="Close tab">
              <svg width="9" height="9" viewBox="0 0 9 9" aria-hidden="true"><path d="M1 1l7 7M8 1L1 8" stroke="#000" strokeWidth="1.800" /></svg>
            </button>
          </TabRest>
        </TabStrip>
        <Details>
          <DetailList>
            <li>
              <DetailRow><DetailToggle aria-label="Collapse" /><span>Resource Directory</span></DetailRow>
              <ul>
                {entries.map((entry) => (
                  <li key={entry}><DetailRow><DetailToggle $closed aria-label="Expand" /><span>{entry}</span></DetailRow></li>
                ))}
              </ul>
            </li>
          </DetailList>
        </Details>
        <EmptyPane />
      </MainColumn>
    </CffBody>
  </Cff>
);

/* ---------- Taskbar ---------- */

const Bar = styled.footer`
  height: 40px;
  flex: none;
  display: flex;
  color: #fff;
  background: linear-gradient(90deg, #001722, #00111d 60%, #000a16);
`;

const TaskButton = styled.button<{ $wide?: boolean; $state?: "open" | "active" }>`
  width: ${(p) => (p.$wide ? 50 : 48)}px;
  display: grid;
  place-items: center;
  margin-right: 1px;
  ${(p) => p.$state === "open" && css`
    background: linear-gradient(#76b9ed, #76b9ed) center bottom / 40px 2px no-repeat;
  `}
  ${(p) => p.$state === "active" && css`
    background: linear-gradient(#76b9ed, #76b9ed) center bottom / 48px 2px no-repeat, #35444f;
  `}
`;

const StartButton = styled.button`
  width: 48px;
  display: grid;
  place-items: center;
`;

const SearchField = styled.label`
  width: 288px;
  display: flex;
  align-items: center;
  gap: 10px;
  padding-left: 12px;
  color: #222;
  background: #f0f0f0;
  border: 1px solid #fff;
  border-bottom-color: #a8a8a8;
  outline: 1px solid #bcc4c8;
  outline-offset: -1px;
  input { width: 220px; font-size: 14px; outline: 0; }
  input::placeholder { color: #333; opacity: 1; }
`;

const Tray = styled.div`
  margin-left: auto;
  display: flex;
`;

const TrayButton = styled.button<{ $wide?: boolean }>`
  width: ${(p) => (p.$wide ? 44 : 24)}px;
  display: grid;
  place-items: center;
`;

const Clock = styled.button`
  width: 62px;
  line-height: 18px;
  text-align: center;
`;

const ShowDesktop = styled.button`
  width: 5px;
  margin-left: 6px;
  border-left: 1px solid #5a6068;
`;

const Taskbar = () => (
  <Bar>
    <StartButton aria-label="Start">
      <svg width="16" height="16" viewBox="0 0 16 16" fill="#fff" aria-hidden="true"><path d="M0 2.300l6.500-.9v6.100H0zM7.300 1.300L16 0v7.500H7.300zM0 8.300h6.500v6.200L0 13.600zM7.300 8.300H16V16l-8.700-1.300z" /></svg>
    </StartButton>
    <SearchField>
      <svg width="17" height="17" viewBox="0 0 17 17" fill="none" stroke="#222" strokeWidth="1.400" aria-hidden="true"><circle cx="10.500" cy="6" r="5" /><path d="M7 10l-6.500 6.500" /></svg>
      <input type="text" aria-label="Search" placeholder="Type here to search" />
    </SearchField>
    <TaskButton $wide aria-label="Task View">
      <svg width="17" height="15" viewBox="0 0 17 15" fill="none" stroke="#fff" aria-hidden="true"><path d="M.5 0v2.500h11V0M.5 15v-2.500h11V15M14.500 0v3M14.500 8v7" /><path d="M.5 4.500h11v6H.5z" /><path d="M13 5.500h3" strokeWidth="3" /></svg>
    </TaskButton>
    <TaskButton aria-label="Microsoft Edge"><svg width="24" height="24" viewBox="0 0 48 48" aria-hidden="true"><EdgeArt /></svg></TaskButton>
    <TaskButton $state="open" aria-label="File Explorer">
      <svg width="22" height="18" viewBox="0 0 22 18" aria-hidden="true"><path d="M0 1q0-1 1-1h7l2 2h11q1 0 1 1v14H0z" fill="#e8a526" /><path d="M0 4h22v13H0z" fill="#fcd96c" /><path d="M4 10q0-1 1-1h12q1 0 1 1v8h-4v-5H8v5H4z" fill="#3a96dd" /></svg>
    </TaskButton>
    <TaskButton aria-label="Firefox"><svg width="24" height="24" viewBox="0 0 48 48" aria-hidden="true"><FirefoxArt /></svg></TaskButton>
    <TaskButton $state="active" aria-label="CFF Explorer"><svg width="24" height="18" viewBox="0 0 44 32" aria-hidden="true"><ChiliArt /></svg></TaskButton>
    <Tray>
      <TrayButton aria-label="Show hidden icons"><svg width="12" height="7" viewBox="0 0 12 7" fill="none" stroke="#fff" strokeWidth="1.200" aria-hidden="true"><path d="M.5 6.500L6 1l5.500 5.500" /></svg></TrayButton>
      <TrayButton aria-label="Meet Now"><svg width="12" height="16" viewBox="0 0 12 16" fill="none" stroke="#fff" strokeWidth="1.100" aria-hidden="true"><rect x="1" y="4.500" width="7" height="7" rx="1" /><path d="M8 7l3-1.500v5L8 9M2 2q3-2.500 6 0M2 14q3 2.500 6 0" /></svg></TrayButton>
      <TrayButton aria-label="Network"><svg width="17" height="14" viewBox="0 0 17 14" fill="none" stroke="#fff" aria-hidden="true"><path d="M5 2.500h11.500v8H5.500M8 13.500h7M10.500 10.500v3M.5 1.500h4v3h-4zM2.500 4.500v9M2.500 13.500h3" /></svg></TrayButton>
      <TrayButton aria-label="Volume"><svg width="17" height="14" viewBox="0 0 17 14" fill="none" stroke="#fff" aria-hidden="true"><path d="M.5 5v4h2.500l3 3V2L3 5zM8.500 5q1.500 2 0 4M11 3q3 4 0 8M13.500 1q4.500 6 0 12" /></svg></TrayButton>
      <Clock>4:26 PM<br />3/24/2025</Clock>
      <TrayButton $wide aria-label="Notifications"><svg width="17" height="17" viewBox="0 0 17 17" fill="none" stroke="#fff" strokeWidth="1.200" aria-hidden="true"><path d="M1 1h15v12h-5l-2.500 3L6 13H1z" /></svg></TrayButton>
      <ShowDesktop aria-label="Show desktop" />
    </Tray>
  </Bar>
);

export default function App() {
  return (
    <Screen>
      <GlobalStyle />
      <Desktop>
        <IconGrid>
          {desktopItems.map(([name, Icon]) => (
            <li key={name}><IconButton><Icon />{name}</IconButton></li>
          ))}
        </IconGrid>
        <ExplorerWindow />
        <CffWindow />
        <Watermark>
          <span>ANY</span>
          <svg width="56" height="62" viewBox="0 0 56 62" fill="none" stroke="currentColor" strokeWidth="3.400" strokeLinejoin="round" strokeLinecap="round" aria-hidden="true">
            <path d="M7 9q-4-1-4 3v39q0 4 3 5M12 47V3l40 23q2 3-2 4M17 15l34 20q3 2 0 4L13 59v-7l29-17" />
          </svg>
          <span>RUN</span>
        </Watermark>
        <BuildInfo>Test Mode<br />Windows 10 Pro<br />Build 19041.vb_release.191206-1406</BuildInfo>
      </Desktop>
      <Taskbar />
    </Screen>
  );
}
